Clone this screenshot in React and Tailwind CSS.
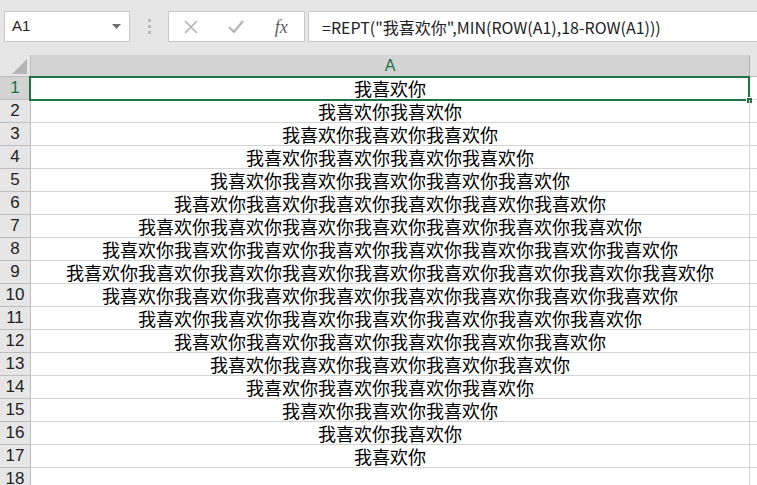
import React from "react";

const unit = "我喜欢你";
const rows = Array.from({ length: 18 }, (_, i) => {
  const r = i + 1;
  if (r > 17) return { r, text: "" };
  return { r, text: unit.repeat(Math.min(r, 18 - r)) };
});

export default function App() {
  return (
    <div className="w-[757px] h-[485px] overflow-hidden bg-white" style={{ fontFamily: '"Noto Sans CJK SC", "Liberation Sans", sans-serif' }}>
      {/* formula bar */}
      <div className="h-[55px] bg-[#e6e6e6] flex items-start pt-[11px]">
        <div className="ml-[4px] w-[126px] h-[31px] bg-white border border-[#c8c8c8] flex items-center justify-between pl-[7px] pr-[8px]">
          <span className="text-[15px] text-[#222]" style={{ fontFamily: '"Liberation Sans", sans-serif' }}>A1</span>
          <svg width="9" height="5" viewBox="0 0 9 5"><path d="M0 0h9L4.5 5z" fill="#6e6e6e" /></svg>
        </div>
        <div className="w-[38px] h-[31px] flex flex-col items-center justify-center gap-[3px]">
          <div className="w-[3px] h-[3px] bg-[#b9b9b9]" />
          <div className="w-[3px] h-[3px] bg-[#b9b9b9]" />
          <div className="w-[3px] h-[3px] bg-[#b9b9b9]" />
        </div>
        <div className="w-[137px] h-[31px] bg-white border border-[#c8c8c8] flex items-center">
          <div className="w-[44px] flex justify-center">
            <svg width="14" height="14" viewBox="0 0 14 14"><path d="M1 1L13 13M13 1L1 13" stroke="#b4b4b4" strokeWidth="1.6" /></svg>
          </div>
          <div className="w-[46px] flex justify-center">
            <svg width="16" height="13" viewBox="0 0 16 13"><path d="M1 7l5 5L15 1" stroke="#b4b4b4" strokeWidth="2.2" fill="none" /></svg>
          </div>
          <div className="w-[46px] flex justify-center">
            <span className="text-[18px] italic text-[#5e5e5e] leading-none" style={{ fontFamily: '"Liberation Serif", serif' }}>fx</span>
          </div>
        </div>
        <div className="ml-[3px] flex-1 h-[31px] bg-white border border-[#c8c8c8] border-r-0 flex items-center pl-[13px]">
          <span className="text-[16px] leading-[20px] text-[#222] whitespace-nowrap">=REPT("我喜欢你",MIN(ROW(A1),18-ROW(A1)))</span>
        </div>
      </div>

      {/* header row */}
      <div className="flex h-[22px]">
        <div className="w-[31px] h-[22px] bg-[#e6e6e6] border-r border-b border-[#bcbcbc] flex items-end justify-end pr-[3px] pb-[2px]">
          <svg width="15" height="15" viewBox="0 0 15 15"><path d="M15 0V15H0z" fill="#b4b4b4" /></svg>
        </div>
        <div className="w-[719px] h-[22px] bg-[#d3d3d3] border-r border-b border-[#b0b0b0] flex items-end justify-center">
          <span className="text-[16px] text-[#217346] leading-[20px]" style={{ fontFamily: '"Liberation Sans", sans-serif' }}>A</span>
        </div>
        <div className="flex-1 h-[22px] bg-[#e6e6e6] border-b border-[#bcbcbc]" />
      </div>

      {/* rows */}
      {rows.map(({ r, text }) => (
        <div key={r} className="flex h-[23px]">
          <div
            className={
              r === 1
                ? "w-[31px] h-[23px] bg-[#d3d3d3] border-r border-b border-[#bcbcbc] flex items-center justify-center text-[17px] leading-[20px] text-[#217346]"
                : "w-[31px] h-[23px] bg-[#e6e6e6] border-r border-b border-[#bcbcbc] flex items-center justify-center text-[17px] leading-[20px] text-[#222]"
            }
            style={{ fontFamily: '"Liberation Sans", sans-serif' }}
          >
            {r}
          </div>
          <div className="relative w-[719px] h-[23px] border-r border-b border-[#d4d4d4] flex items-center justify-center">
            <span className="text-[18px] leading-[20px] text-black whitespace-nowrap">{text}</span>
            {r === 1 && (
              <div className="absolute left-[-2px] top-[-1px] w-[721px] h-[25px] border-2 border-[#217346]">
                <div className="absolute right-[-5px] bottom-[-5px] w-[7px] h-[7px] bg-[#217346] border border-white" />
              </div>
            )}
          </div>
          <div className="flex-1 h-[23px] border-b border-[#d4d4d4]" />
        </div>
      ))}
    </div>
  );
}
